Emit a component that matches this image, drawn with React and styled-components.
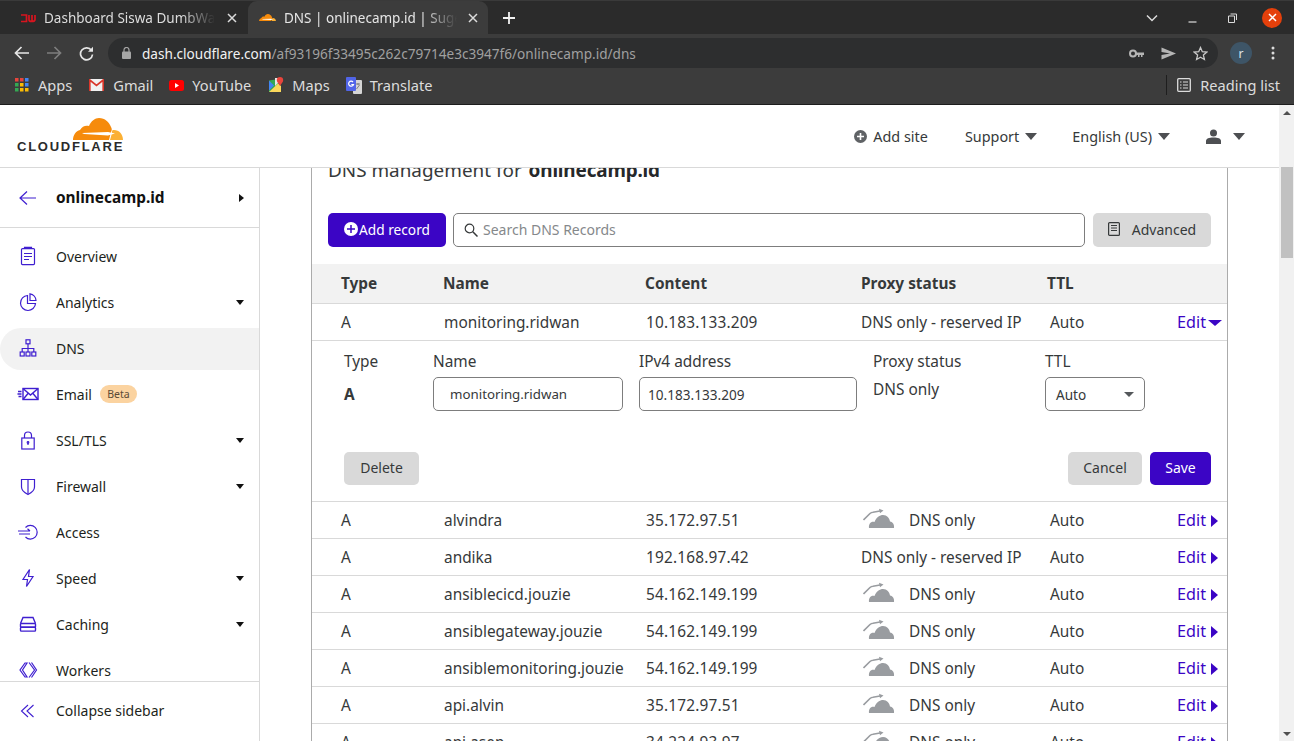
import React from "react";
import styled, { createGlobalStyle } from "styled-components";

const FONT = `"Noto Sans", "Open Sans", "Liberation Sans", sans-serif`;
const BRAND = "#3b05c5";
const INK = "#36393a";

const GlobalStyle = createGlobalStyle`
  html, body { margin: 0; padding: 0; height: 100%; overflow: hidden; background: #fff; }
  body { font-family: ${FONT}; color: ${INK}; }
  * { box-sizing: border-box; }
`;

const Page = styled.div`
  width: 1294px;
  height: 741px;
  display: flex;
  flex-direction: column;
  overflow: hidden;
`;

/* browser chrome */
const TabStrip = styled.div`
  height: 34px;
  background: #2b2b2b;
  border-top: 1px solid #3a3a3a;
  display: flex;
  align-items: stretch;
  padding-right: 12px;
`;
const Tab = styled.div`
  width: ${(p) => p.$w}px;
  display: flex;
  align-items: center;
  padding-left: ${(p) => p.$pad}px;
  background: ${(p) => (p.$active ? "#3c3c3c" : "transparent")};
  border-radius: ${(p) => (p.$active ? "9px 9px 0 0" : "0")};
  color: ${(p) => (p.$active ? "#e6e6e6" : "#dcdcdc")};
  font-size: 13.5px;
`;
const TabTitle = styled.span`
  width: ${(p) => p.$w}px;
  margin-left: 8px;
  white-space: nowrap;
  overflow: hidden;
  -webkit-mask-image: linear-gradient(to right, #000 80%, transparent);
  mask-image: linear-gradient(to right, #000 80%, transparent);
`;
const TabClose = styled.span`
  margin-left: ${(p) => p.$ml}px;
  display: flex;
`;
const NewTab = styled.span`
  margin-left: 14px;
  display: flex;
  align-items: center;
`;
const WindowControls = styled.div`
  margin-left: auto;
  display: flex;
  align-items: center;
`;
const WinBtn = styled.span`
  width: 40px;
  display: flex;
  justify-content: center;
  align-items: center;
`;
const CloseDot = styled.span`
  width: 20px;
  height: 20px;
  border-radius: 50%;
  background: #e5400b;
  display: flex;
  align-items: center;
  justify-content: center;
  margin-left: 10px;
`;
const Toolbar = styled.div`
  height: 34px;
  background: #3c3c3c;
  display: flex;
  align-items: center;
  padding: 4px 0 0 14px;
`;
const NavIcon = styled.span`
  display: flex;
  width: ${(p) => p.$w}px;
`;
const Omnibox = styled.div`
  width: 1110px;
  height: 30px;
  border-radius: 15px;
  background: #2d2e2f;
  display: flex;
  align-items: center;
  padding-left: 14px;
  font-size: 13.6px;
`;
const UrlHost = styled.span`
  color: #f2f2f2;
  margin-left: 11px;
`;
const UrlPath = styled.span`
  color: #a0a0a0;
`;
const OmniIcons = styled.div`
  margin-left: auto;
  display: flex;
  align-items: center;
  gap: 17px;
  padding-right: 10px;
`;
const Avatar = styled.span`
  width: 22px;
  height: 22px;
  margin-left: 12px;
  border-radius: 50%;
  background: #3e5567;
  color: #dfe5ea;
  font-size: 12px;
  display: flex;
  align-items: center;
  justify-content: center;
`;
const MenuDots = styled.span`
  display: flex;
  margin-left: 19px;
`;
const Bookmarks = styled.div`
  height: 37px;
  background: #3c3c3c;
  border-bottom: 1px solid #1d1d1d;
  display: flex;
  align-items: center;
  padding: 0 0 2px 15px;
  color: #dcdcdc;
  font-size: 14.6px;
`;
const Bookmark = styled.span`
  display: flex;
  align-items: center;
  gap: ${(p) => p.$gap || 9}px;
  margin-right: ${(p) => p.$mr}px;
`;
const ReadingList = styled.span`
  margin-left: auto;
  display: flex;
  align-items: center;
  gap: 9px;
  padding-left: 10px;
  padding-right: 14px;
  height: 20px;
  border-left: 1px solid #1e1e1e;
`;

/* app */
const AppArea = styled.div`
  flex: 1;
  min-height: 0;
  display: flex;
`;
const Column = styled.div`
  flex: 1;
  min-width: 0;
  display: flex;
  flex-direction: column;
`;
const Scrollbar = styled.div`
  width: 15px;
  background: #f1f1f1;
  display: flex;
  flex-direction: column;
  align-items: center;
  padding-top: 6px;
`;
const ScrollUp = styled.div`
  transform: rotate(180deg);
  display: flex;
`;
const ScrollThumb = styled.div`
  width: 12px;
  height: 91px;
  margin-top: 52px;
  background: #c1c1c1;
`;
const ScrollDown = styled.div`
  margin-top: auto;
  margin-bottom: 5px;
  display: flex;
`;
const Header = styled.header`
  height: 63px;
  flex: none;
  background: #fff;
  border-bottom: 1px solid #d9d9d9;
  display: flex;
  align-items: center;
  padding: 0 34px 0 17px;
  color: #36393a;
  font-size: 14.4px;
`;
const Logo = styled.div`
  display: flex;
  flex-direction: column;
  align-items: flex-end;
  width: 106px;
  margin-top: -2px;
`;
const Wordmark = styled.span`
  font-family: "Liberation Sans", sans-serif;
  font-weight: 700;
  font-size: 13px;
  line-height: 12px;
  letter-spacing: 1.75px;
  color: #2b2b2b;
  width: 106px;
  margin-top: 1px;
  white-space: nowrap;
`;
const HeaderMenu = styled.nav`
  margin-left: auto;
  display: flex;
  align-items: center;
`;
const HeaderItem = styled.span`
  display: flex;
  align-items: center;
  gap: ${(p) => p.$gap}px;
  margin-left: ${(p) => p.$ml}px;
`;
const Caret = styled.span`
  display: inline-block;
  flex: none;
  width: 0;
  height: 0;
  ${(p) =>
    p.$dir === "right"
      ? `border-top: ${p.$h}px solid transparent;
         border-bottom: ${p.$h}px solid transparent;
         border-left: ${p.$w}px solid ${p.$color};`
      : `border-left: ${p.$w}px solid transparent;
         border-right: ${p.$w}px solid transparent;
         border-top: ${p.$h}px solid ${p.$color};`}
`;
const Body = styled.div`
  flex: 1;
  min-height: 0;
  display: flex;
`;
const Sidebar = styled.aside`
  width: 260px;
  flex: none;
  border-right: 1px solid #d9d9d9;
  display: flex;
  flex-direction: column;
  color: #1d1f20;
`;
const SiteRow = styled.div`
  height: 60px;
  flex: none;
  border-bottom: 1px solid #d9d9d9;
  display: flex;
  align-items: center;
  padding: 0 15px 0 18px;
  font-weight: 700;
  font-size: 15.4px;
  color: #111;
`;
const SiteName = styled.span`
  margin-left: 18px;
  flex: 1;
`;
const NavList = styled.div`
  flex: 1;
  min-height: 0;
  overflow: hidden;
  padding-top: 8px;
`;
const NavItem = styled.div`
  height: 42px;
  margin-bottom: 4px;
  display: flex;
  align-items: center;
  padding: 0 15px 2px 18px;
  font-size: 14px;
  border-radius: 21px 0 0 21px;
  background: ${(p) => (p.$active ? "#f2f2f2" : "transparent")};
`;
const NavGlyph = styled.span`
  width: 20px;
  height: 20px;
  margin-right: 18px;
  display: flex;
  align-items: center;
  justify-content: center;
  flex: none;
`;
const NavLabel = styled.span`
  flex: 1;
  display: flex;
  align-items: center;
`;
const Beta = styled.span`
  margin-left: 8px;
  width: 37px;
  height: 18px;
  border-radius: 9px;
  background: #fbd3a0;
  color: #5a4a36;
  font-size: 10.5px;
  display: flex;
  align-items: center;
  justify-content: center;
`;
const SidebarFooter = styled.div`
  height: 60px;
  flex: none;
  border-top: 1px solid #d9d9d9;
  display: flex;
  align-items: center;
  padding: 0 18px 2px;
  font-size: 14px;
`;
const Main = styled.main`
  flex: 1;
  min-width: 0;
  overflow: hidden;
  padding-left: 51px;
`;
const Card = styled.section`
  width: 917px;
  margin-top: -12px;
  border-left: 1px solid #ababab;
  border-right: 1px solid #ababab;
`;
const Heading = styled.h2`
  margin: 0;
  padding-left: 16px;
  height: 28px;
  line-height: 28px;
  font-size: 18.9px;
  font-weight: 400;
  color: #36393a;
  b { font-weight: 700; color: #26282a; margin-left: 2px; letter-spacing: -0.15px; }
`;
const Controls = styled.div`
  display: flex;
  padding: 0 16px;
  margin: 29px 0 17px;
  height: 34px;
`;
const AddButton = styled.button`
  width: 118px;
  border: 0;
  border-radius: 5px;
  background: ${BRAND};
  color: #fff;
  font: 13.7px ${FONT};
  display: flex;
  align-items: center;
  justify-content: center;
  gap: 1px;
  padding: 0 0 2px;
`;
const SearchBox = styled.label`
  flex: 1;
  margin: 0 8px 0 7px;
  border: 1px solid #7d7d7d;
  border-radius: 5px;
  display: flex;
  align-items: center;
  gap: 5px;
  padding: 0 0 0 10px;
`;
const SearchInput = styled.input`
  border: 0;
  outline: 0;
  flex: 1;
  padding: 0 0 2px;
  font: 14px ${FONT};
  background: transparent;
  &::placeholder { color: #85888b; opacity: 1; }
`;
const GreyButton = styled.button`
  width: ${(p) => p.$w}px;
  height: ${(p) => p.$h || 33}px;
  border: 0;
  border-radius: 5px;
  background: #d9d9d9;
  color: ${INK};
  font: 14px ${FONT};
  display: flex;
  align-items: center;
  justify-content: center;
  gap: ${(p) => p.$gap || 0}px;
  padding: 0 0 2px;
`;
const SaveButton = styled(GreyButton)`
  background: ${BRAND};
  color: #fff;
`;
const HeadRow = styled.div`
  height: 40px;
  background: #f2f2f2;
  border-bottom: 1px solid #d9d9d9;
  display: grid;
  grid-template-columns: 102px 202px 216px 186px 1fr;
  align-items: center;
  padding-left: 29px;
  font-weight: 700;
  font-size: 15.4px;
  color: #36393a;
`;
const Row = styled.div`
  height: 37px;
  border-bottom: 1px solid #d9d9d9;
  display: grid;
  grid-template-columns: 103px 202px 215px 189px 127px 1fr;
  align-items: center;
  padding-left: 29px;
  font-size: 15.4px;
  white-space: nowrap;
`;
const Address = styled.span`
  letter-spacing: 0.17px;
`;
const ProxyCell = styled.span`
  display: flex;
  align-items: center;
  gap: 14px;
  padding-left: 2px;
`;
const CloudSlot = styled.span`
  display: flex;
  margin-top: -5px;
`;
const EditLink = styled.a`
  color: ${BRAND};
  font-size: 16.2px;
  display: flex;
  align-items: center;
  gap: ${(p) => p.$gap}px;
  padding-bottom: 1px;
  ${Caret} { margin-top: 3px; }
`;
const Panel = styled.div`
  border-bottom: 1px solid #d9d9d9;
  padding: 10px 16px 16px 32px;
`;
const PanelGrid = styled.div`
  display: grid;
  grid-template-columns: 89px 206px 234px 172px 1fr;
  grid-template-rows: 24px 34px;
  row-gap: 2px;
  font-size: 15.4px;
`;
const TypeValue = styled.strong`
  align-self: center;
  font-size: 15.4px;
  padding-top: 1px;
`;
const ProxyValue = styled.span`
  line-height: 24px;
  padding-top: 1px;
`;
const TextField = styled.input`
  width: ${(p) => p.$w}px;
  height: 34px;
  border: 1px solid #7d7d7d;
  border-radius: 5px;
  padding: 0 0 0 ${(p) => p.$pad}px;
  font: ${(p) => p.$fs}px ${FONT};
  color: ${INK};
  outline: 0;
`;
const SelectBox = styled.div`
  width: 100px;
  height: 34px;
  border: 1px solid #7d7d7d;
  border-radius: 5px;
  display: flex;
  align-items: center;
  justify-content: space-between;
  padding: 0 10px;
  font-size: 13.6px;
`;
const PanelActions = styled.div`
  display: flex;
  align-items: center;
  margin-top: 41px;
`;
const ActionsRight = styled.div`
  margin-left: auto;
  display: flex;
  gap: 8px;
`;

/* drawings */
const stroke = { fill: "none", stroke: "#3f1fd0", strokeWidth: 1.2 };

const CloudMark = ({ w }) => (
  <svg width={w} viewBox="0 0 50 22" style={{ display: "block" }}>
    <path d="M0 22C0 17 3 13 7 12C9 8 13 7 16 8C18 3 22 0 26 0C32 0 36 4 38 9C39 11 39 12 38 14L36 22Z" fill="#f68b0c" />
    <path d="M37 22C38 19 39 15 39 13C39 12 40 12 41 12C46 12 50 16 50 22Z" fill="#fbb034" />
    <path d="M9 15L35 14L42 15.500L35 17.500L11 16Z" fill="#fff" />
  </svg>
);
const GreyCloud = () => (
  <svg width="32" height="22" viewBox="0 0 32 22" style={{ display: "block", flex: "none" }}>
    <path d="M6 21C5.500 17 8 14 11.500 15C13 10.500 17 8 20 8C24 8 26.500 11 27 14.500C30 15 31.500 18 31 21Z" fill="#999ca0" />
    <path d="M0.500 13L7 6.500C8 5.500 9 5.200 10 5.200L17 4" fill="none" stroke="#999ca0" strokeWidth="1.600" />
    <path d="M16 1.800L20.500 3.500L17 6.200Z" fill="#999ca0" />
  </svg>
);
const Icon = ({ w = 20, h = 20, vb, children }) => (
  <svg width={w} height={h} viewBox={vb || `0 0 ${w} ${h}`} style={{ display: "block", flex: "none" }}>
    {children}
  </svg>
);
const navIcons = {
  overview: (
    <Icon><g {...stroke}><rect x="3.500" y="2.600" width="13" height="16" rx="1" /><path d="M6.500 2.600V1.300H13.500V2.600M6 7.500H14M6 10.500H14M6 13.500H11" /></g></Icon>
  ),
  analytics: (
    <Icon><g {...stroke}><path d="M9.500 3.500A7.500 7.500 0 1 0 17.500 11.500H9.500Z" /><path d="M12 1.800A7 7 0 0 1 18 8.500H12Z" /></g></Icon>
  ),
  dns: (
    <Icon><g {...stroke}><rect x="8" y="1.800" width="4" height="4" /><rect x="2.200" y="14" width="4" height="4" /><rect x="8" y="14" width="4" height="4" /><rect x="13.800" y="14" width="4" height="4" /><path d="M10 5.800V14M4.200 14V10.500H15.800V14" /></g></Icon>
  ),
  email: (
    <Icon w={22} h={20}><g {...stroke} strokeWidth="1.400"><rect x="6" y="4.500" width="15" height="11" /><path d="M6 4.500L13.500 11L21 4.500M6 15.500L11 9.500M21 15.500L16 9.500M1 7.500H4.500M0.500 10H4.500M1.500 12.500H4.500" /></g></Icon>
  ),
  lock: (
    <Icon><g {...stroke}><rect x="3.800" y="8" width="12.400" height="11" /><path d="M6.500 8V5.500A3.500 3.500 0 0 1 13.500 5.500V8" /><circle cx="10" cy="12.500" r="0.800" /><path d="M10 13V15" /></g></Icon>
  ),
  shield: (
    <Icon><g {...stroke}><path d="M3.500 3.500H16.500V11C16.500 14.500 13 17 10 18.500C7 17 3.500 14.500 3.500 11Z" /><path d="M10 3.500V18" /></g></Icon>
  ),
  access: (
    <Icon w={22} h={20}><g {...stroke}><path d="M8.500 5.500A6.800 6.800 0 1 1 8.500 15" /><path d="M1 9H13M13 9L10.500 6.800M2 12H13" /></g></Icon>
  ),
  speed: (
    <Icon><g {...stroke}><path d="M11.500 1.500L5 11.500H9.500L8.500 18.500L15 8.500H10.500Z" /></g></Icon>
  ),
  caching: (
    <Icon w={22} h={20}><g {...stroke} strokeWidth="1.400"><path d="M3.500 9.500L6 3.500H16L18.500 9.500" /><rect x="3.500" y="9.500" width="15" height="3.800" rx="0.800" /><rect x="3.500" y="13.300" width="15" height="3.800" rx="0.800" /></g></Icon>
  ),
  workers: (
    <Icon><g {...stroke}><path d="M7 3L2 10L7 17H9L4.500 10L9 3ZM11 2.500L16.500 10L11 17.500M13.500 2.500L18.500 10L13.500 17.500" /></g></Icon>
  ),
};

const RedDw = () => (
  <Icon w={16} h={12}>
    <path d="M1 3H6.500V9.500H1M9 3V7.500C9 9 10 9.500 11.500 9.500C13.500 9.500 15 9 15 7.500V3M12 3V9" fill="none" stroke="#d8141f" strokeWidth="1.700" />
  </Icon>
);
const X = ({ s = 10, c = "#dcdcdc", sw = 1.500 }) => (
  <Icon w={s} h={s}>
    <path d={`M1 1L${s - 1} ${s - 1}M${s - 1} 1L1 ${s - 1}`} stroke={c} strokeWidth={sw} fill="none" />
  </Icon>
);
const AppsIcon = () => {
  const colours = ["#e8453c", "#e8453c", "#4285f4", "#34a853", "#fbbc05", "#4285f4", "#34a853", "#fbbc05", "#fbbc05"];
  return (
    <Icon w={14} h={14}>
      {colours.map((c, i) => (
        <rect key={i} x={(i % 3) * 5} y={Math.floor(i / 3) * 5} width="3.500" height="3.500" fill={c} />
      ))}
    </Icon>
  );
};
const GmailIcon = () => (
  <Icon w={15} h={12}>
    <rect width="15" height="12" rx="1" fill="#f1f1f1" />
    <path d="M0.800 12V1L7.500 6.500L14.200 1V12" fill="none" stroke="#d9372b" strokeWidth="1.700" />
  </Icon>
);
const YoutubeIcon = () => (
  <Icon w={15} h={11}>
    <rect width="15" height="11" rx="2.500" fill="#f00" />
    <path d="M6 3L10 5.500L6 8Z" fill="#fff" />
  </Icon>
);
const MapsIcon = () => (
  <Icon w={15} h={16}>
    <path d="M0 3.500L10 2V15L0 15Z" fill="#34a853" />
    <path d="M0 15L9 6.500L12 9V15Z" fill="#fbd75b" />
    <path d="M0 3.500L5 8.500L0 13.500Z" fill="#4285f4" />
    <path d="M6 1H10V5L6 9Z" fill="#e8e8e8" />
    <path d="M11 0A3.200 3.200 0 0 1 14.200 3.200C14.200 5 12 7 11 9C10 7 7.800 5 7.800 3.200A3.200 3.200 0 0 1 11 0Z" fill="#e8453c" />
  </Icon>
);
const TranslateIcon = () => (
  <Icon w={16} h={17}>
    <rect x="7" y="3" width="9" height="14" rx="1" fill="#d5d5d5" />
    <path d="M10 7H14M12 6V8M10.500 12L13.500 8" stroke="#777" strokeWidth="0.900" fill="none" />
    <rect width="10" height="14" rx="1" fill="#5165e8" />
    <path d="M7 5A2.500 2.500 0 1 0 7.500 7.500H5.300" fill="none" stroke="#fff" strokeWidth="1.200" />
  </Icon>
);

const navItems = [
  { label: "Overview", icon: "overview" },
  { label: "Analytics", icon: "analytics", caret: true },
  { label: "DNS", icon: "dns", active: true },
  { label: "Email", icon: "email", beta: true },
  { label: "SSL/TLS", icon: "lock", caret: true },
  { label: "Firewall", icon: "shield", caret: true },
  { label: "Access", icon: "access" },
  { label: "Speed", icon: "speed", caret: true },
  { label: "Caching", icon: "caching", caret: true },
  { label: "Workers", icon: "workers" },
];

const RESERVED = "DNS only - reserved IP";
const records = [
  ["alvindra", "35.172.97.51", "DNS only"],
  ["andika", "192.168.97.42", RESERVED],
  ["ansiblecicd.jouzie", "54.162.149.199", "DNS only"],
  ["ansiblegateway.jouzie", "54.162.149.199", "DNS only"],
  ["ansiblemonitoring.jouzie", "54.162.149.199", "DNS only"],
  ["api.alvin", "35.172.97.51", "DNS only"],
  ["api.asep", "34.224.93.97", "DNS only"],
];

export default function App() {
  return (
    <Page>
      <GlobalStyle />
      <TabStrip>
        <Tab $w={248} $pad={20}>
          <RedDw />
          <TabTitle $w={171}>Dashboard Siswa DumbWays</TabTitle>
          <TabClose $ml={12}><X /></TabClose>
        </Tab>
        <Tab $w={240} $pad={11} $active>
          <CloudMark w={17} />
          <TabTitle $w={173}>DNS | onlinecamp.id | Sugeng</TabTitle>
          <TabClose $ml={11}><X /></TabClose>
        </Tab>
        <NewTab>
          <Icon w={14} h={14}><path d="M7 1V13M1 7H13" stroke="#f2f2f2" strokeWidth="1.800" /></Icon>
        </NewTab>
        <WindowControls>
          <WinBtn>
            <Icon w={12} h={8}><path d="M1 1.500L6 6.500L11 1.500" stroke="#dcdcdc" strokeWidth="1.500" fill="none" /></Icon>
          </WinBtn>
          <WinBtn>
            <Icon w={9} h={10}><path d="M0.500 9H8.500" stroke="#dcdcdc" strokeWidth="1.200" /></Icon>
          </WinBtn>
          <WinBtn>
            <Icon w={9} h={10}><path d="M0.500 3H6.500V9.500H0.500ZM2.500 1H8.500V7" stroke="#dcdcdc" fill="none" /></Icon>
          </WinBtn>
          <CloseDot><X s={9} c="#fff" /></CloseDot>
        </WindowControls>
      </TabStrip>

      <Toolbar>
        <NavIcon $w={32}>
          <Icon w={16} h={14}><path d="M15 7H2M7.500 1L1.500 7L7.500 13" stroke="#e6e6e6" strokeWidth="1.700" fill="none" /></Icon>
        </NavIcon>
        <NavIcon $w={33}>
          <Icon w={16} h={14}><path d="M1 7H14M8.500 1L14.500 7L8.500 13" stroke="#7e7e7e" strokeWidth="1.700" fill="none" /></Icon>
        </NavIcon>
        <NavIcon $w={29}>
          <Icon w={15} h={15}><path d="M12.500 4.500A6 6 0 1 0 13.500 8.500" stroke="#e6e6e6" strokeWidth="1.700" fill="none" /><path d="M14 0.800V5.800H9Z" fill="#e6e6e6" /></Icon>
        </NavIcon>
        <Omnibox>
          <Icon w={9} h={12}><rect y="4.500" width="9" height="7.500" rx="1" fill="#a6a6a6" /><path d="M2 5V3A2.500 2.500 0 0 1 7 3V5" stroke="#a6a6a6" strokeWidth="1.200" fill="none" /></Icon>
          <UrlHost>dash.cloudflare.com</UrlHost>
          <UrlPath>/af93196f33495c262c79714e3c3947f6/onlinecamp.id/dns</UrlPath>
          <OmniIcons>
            <Icon w={15} h={9}><circle cx="4" cy="4.500" r="3" fill="none" stroke="#b5b5b5" strokeWidth="2" /><path d="M7 3.500H15V6H13.500V8H12V6H10.500V8H9V6H7Z" fill="#b5b5b5" /></Icon>
            <Icon w={15} h={13}><path d="M0.500 0.500L15 6.500L0.500 12.500V8L9 6.500L0.500 5Z" fill="#b5b5b5" /></Icon>
            <Icon w={15} h={15}><path d="M7.500 1.500L9.300 5.700L13.800 6.100L10.400 9.100L11.400 13.500L7.500 11.200L3.600 13.500L4.600 9.100L1.200 6.100L5.700 5.700Z" fill="none" stroke="#c8c8c8" strokeWidth="1.300" /></Icon>
          </OmniIcons>
        </Omnibox>
        <Avatar>r</Avatar>
        <MenuDots>
          <Icon w={4} h={14}><circle cx="2" cy="2" r="1.500" fill="#dcdcdc" /><circle cx="2" cy="7" r="1.500" fill="#dcdcdc" /><circle cx="2" cy="12" r="1.500" fill="#dcdcdc" /></Icon>
        </MenuDots>
      </Toolbar>

      <Bookmarks>
        <Bookmark $mr={17}><AppsIcon />Apps</Bookmark>
        <Bookmark $mr={16}><GmailIcon />Gmail</Bookmark>
        <Bookmark $gap={8} $mr={18}><YoutubeIcon />YouTube</Bookmark>
        <Bookmark $gap={8} $mr={16}><MapsIcon />Maps</Bookmark>
        <Bookmark $gap={8} $mr={0}><TranslateIcon />Translate</Bookmark>
        <ReadingList>
          <Icon w={14} h={14}><rect x="0.700" y="0.700" width="12.600" height="12.600" rx="1" fill="none" stroke="#dcdcdc" strokeWidth="1.300" /><path d="M3 4H4.500M6 4H11M3 7H4.500M6 7H11M3 10H4.500M6 10H11" stroke="#dcdcdc" strokeWidth="1.200" /></Icon>
          Reading list
        </ReadingList>
      </Bookmarks>

      <AppArea>
        <Column>
          <Header>
            <Logo>
              <CloudMark w={50} />
              <Wordmark>CLOUDFLARE</Wordmark>
            </Logo>
            <HeaderMenu>
              <HeaderItem $gap={6} $ml={0}>
                <Icon w={13} h={13}><circle cx="6.500" cy="6.500" r="6.500" fill="#5f6265" /><path d="M6.500 3V10M3 6.500H10" stroke="#fff" strokeWidth="1.600" /></Icon>
                Add site
              </HeaderItem>
              <HeaderItem $gap={6} $ml={37}>Support <Caret $w={6.500} $h={7} $color="#4d4f52" /></HeaderItem>
              <HeaderItem $gap={6} $ml={35}>English (US) <Caret $w={6.500} $h={7} $color="#4d4f52" /></HeaderItem>
              <HeaderItem $gap={12} $ml={36}>
                <Icon w={15} h={15}><circle cx="7.500" cy="4" r="3.500" fill="#4d4f52" /><path d="M0 15V12C0 9.500 3 8.500 7.500 8.500C12 8.500 15 9.500 15 12V15Z" fill="#4d4f52" /></Icon>
                <Caret $w={6.500} $h={7} $color="#4d4f52" />
              </HeaderItem>
            </HeaderMenu>
          </Header>
          <Body>
            <Sidebar>
              <SiteRow>
                <Icon><path d="M2 10H18M9 3.500L2 10L9 16.500" stroke="#3f1fd0" strokeWidth="1.200" fill="none" /></Icon>
                <SiteName>onlinecamp.id</SiteName>
                <Caret $dir="right" $w={5} $h={4.500} $color="#111" />
              </SiteRow>
              <NavList>
                {navItems.map((item) => (
                  <NavItem key={item.label} $active={item.active}>
                    <NavGlyph>{navIcons[item.icon]}</NavGlyph>
                    <NavLabel>
                      {item.label}
                      {item.beta && <Beta>Beta</Beta>}
                    </NavLabel>
                    {item.caret && <Caret $w={4.500} $h={5} $color="#111" />}
                  </NavItem>
                ))}
              </NavList>
              <SidebarFooter>
                <NavGlyph>
                  <Icon><path d="M10 4L3.500 10L10 16M15.500 4L9 10L15.500 16" stroke="#3f1fd0" strokeWidth="1.100" fill="none" /></Icon>
                </NavGlyph>
                Collapse sidebar
              </SidebarFooter>
            </Sidebar>
            <Main>
              <Card>
                <Heading>DNS management for <b>onlinecamp.id</b></Heading>
                <Controls>
                  <AddButton>
                    <Icon w={14} h={14}><circle cx="7" cy="7" r="7" fill="#fff" /><path d="M7 3V11M3 7H11" stroke={BRAND} strokeWidth="1.500" /></Icon>
                    Add record
                  </AddButton>
                  <SearchBox>
                    <Icon w={14} h={14}><circle cx="5.500" cy="5.500" r="4.300" fill="none" stroke="#36393a" strokeWidth="1.200" /><path d="M8.800 8.800L13.500 13.500" stroke="#36393a" strokeWidth="1.500" /></Icon>
                    <SearchInput placeholder="Search DNS Records" />
                  </SearchBox>
                  <GreyButton $w={118} $h={34} $gap={12}>
                    <Icon w={12} h={14}><rect x="0.600" y="0.600" width="10.800" height="12.800" rx="1" fill="none" stroke="#36393a" strokeWidth="1.200" /><path d="M3 3.500H9M3 6H9M3 8.500H9" stroke="#36393a" /></Icon>
                    Advanced
                  </GreyButton>
                </Controls>
                <HeadRow>
                  <span>Type</span>
                  <span>Name</span>
                  <span>Content</span>
                  <span>Proxy status</span>
                  <span>TTL</span>
                </HeadRow>
                <Row>
                  <span>A</span>
                  <span>monitoring.ridwan</span>
                  <Address>10.183.133.209</Address>
                  <span>{RESERVED}</span>
                  <span>Auto</span>
                  <EditLink $gap={2}>Edit <Caret $w={7} $h={6} $color={BRAND} /></EditLink>
                </Row>
                <Panel>
                  <PanelGrid>
                    <span>Type</span>
                    <span>Name</span>
                    <span>IPv4 address</span>
                    <span>Proxy status</span>
                    <span>TTL</span>
                    <TypeValue>A</TypeValue>
                    <TextField $w={190} $pad={16} $fs={13.3} readOnly value="monitoring.ridwan" />
                    <TextField $w={218} $pad={8} $fs={13.6} readOnly value="10.183.133.209" />
                    <ProxyValue>DNS only</ProxyValue>
                    <SelectBox>
                      Auto
                      <Caret $w={5} $h={5} $color="#55585b" />
                    </SelectBox>
                  </PanelGrid>
                  <PanelActions>
                    <GreyButton $w={75}>Delete</GreyButton>
                    <ActionsRight>
                      <GreyButton $w={74}>Cancel</GreyButton>
                      <SaveButton $w={61}>Save</SaveButton>
                    </ActionsRight>
                  </PanelActions>
                </Panel>
                {records.map(([name, ip, proxy]) => (
                  <Row key={name}>
                    <span>A</span>
                    <span>{name}</span>
                    <Address>{ip}</Address>
                    {proxy === RESERVED ? (
                      <span>{proxy}</span>
                    ) : (
                      <ProxyCell><CloudSlot><GreyCloud /></CloudSlot>{proxy}</ProxyCell>
                    )}
                    <span>Auto</span>
                    <EditLink $gap={5}>Edit <Caret $dir="right" $w={7} $h={6.500} $color={BRAND} /></EditLink>
                  </Row>
                ))}
              </Card>
            </Main>
          </Body>
        </Column>
        <Scrollbar>
          <ScrollUp><Caret $w={4} $h={4} $color="#505050" /></ScrollUp>
          <ScrollThumb />
          <ScrollDown><Caret $w={4} $h={4} $color="#505050" /></ScrollDown>
        </Scrollbar>
      </AppArea>
    </Page>
  );
}
